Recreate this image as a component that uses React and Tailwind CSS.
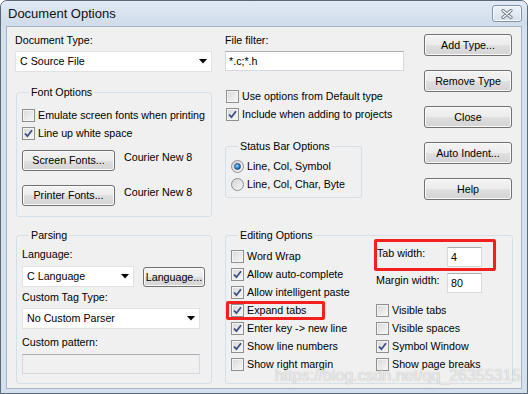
import React from 'react'

function Check({ checked, label }) {
  return (
    <div className="flex h-[13px] items-center gap-[3px] leading-[13px] whitespace-nowrap">
      <span className="relative flex h-[13px] w-[13px] shrink-0 items-center justify-center border border-[#8e8f8f] bg-[linear-gradient(135deg,#d8d8d8,#f7f7f7)] shadow-[inset_0_0_0_1px_#f4f4f4]">
        {checked && (
          <svg width="9" height="9" viewBox="0 0 9 9">
            <path d="M1 4.5 L3.4 7.2 L8 1.2" fill="none" stroke="#3c4d86" strokeWidth="1.8" />
          </svg>
        )}
      </span>
      <span>{label}</span>
    </div>
  )
}

function Radio({ checked, label }) {
  return (
    <div className="flex h-[13px] items-center gap-[3px] leading-[13px] whitespace-nowrap">
      <span className="flex h-[13px] w-[13px] shrink-0 items-center justify-center rounded-full border border-[#8e8f8f] bg-[linear-gradient(135deg,#d4d4d4,#f7f7f7)]">
        {checked && (
          <span className="h-[7px] w-[7px] rounded-full border border-[#1b4f86] bg-[radial-gradient(circle_at_40%_35%,#9fd6ff,#1f78c8_60%,#124f8c)]" />
        )}
      </span>
      <span>{label}</span>
    </div>
  )
}

function Btn({ children, className }) {
  return (
    <div
      className={`flex items-center justify-center rounded-[3px] border border-[#707070] bg-[linear-gradient(#f3f3f3,#ececec_50%,#e0e0e0_50%,#d3d3d3)] shadow-[inset_0_0_0_1px_#fbfbfb] leading-[13px] whitespace-nowrap ${className}`}
    >
      {children}
    </div>
  )
}

function Select({ value, className }) {
  return (
    <div className={`flex items-center justify-between border border-[#e2e2e2] bg-white pl-[4px] pr-[4px] leading-[13px] ${className}`}>
      <span className="whitespace-nowrap">{value}</span>
      <svg width="8" height="5" viewBox="0 0 8 5">
        <path d="M0 0 H8 L4 4.5 Z" fill="#000" />
      </svg>
    </div>
  )
}

function Input({ value, className, disabled }) {
  return (
    <div
      className={`flex items-center border border-[#d5d9df] border-t-[#abadb3] pl-[3px] leading-[13px] ${disabled ? 'bg-[#f0f0f0] border-[#b3b6b9]' : 'bg-white'} ${className}`}
    >
      {value}
    </div>
  )
}

function Group({ title, className, children }) {
  return (
    <fieldset className={`rounded-[3px] border border-[#d5dfe5] ${className}`}>
      <legend className="ml-[7px] h-[13px] px-[2px] leading-[13px]">{title}</legend>
      {children}
    </fieldset>
  )
}

export default function App() {
  return (
    <div className="relative h-[394px] w-[528px] overflow-hidden rounded-t-[7px] border border-[#5b6878] bg-[#d4e0ed] font-['Liberation_Sans',Arial,sans-serif] text-[10.7px] text-black">
      <div className="flex h-[25px] items-start justify-between bg-[linear-gradient(#e1e9f4,#d0dcea)] pl-[7px] pr-[5px]">
        <span className="mt-[5px] text-[13px] leading-[15px] text-[#111]">Document Options</span>
        <div className="mt-[4px] flex h-[17px] w-[30px] items-center justify-center rounded-[3px] border border-[#8294ab] bg-[linear-gradient(#eef3f9,#d6e0ec)] shadow-[inset_0_0_0_1px_#f6f9fc]">
          <svg width="12" height="10" viewBox="0 0 12 10">
            <path d="M2 1.5 L10 8.5 M10 1.5 L2 8.5" stroke="#6d7a8a" strokeWidth="3.2" strokeLinecap="round" />
            <path d="M2 1.5 L10 8.5 M10 1.5 L2 8.5" stroke="#ffffff" strokeWidth="1.4" strokeLinecap="round" />
          </svg>
        </div>
      </div>

      <div className="ml-[5px] mr-[5px] h-[363px] border border-[#a5b4c7] bg-[#f0f0f0]">
        {/* top section */}
        <div className="flex pl-[8px] pt-[7px]">
          <div className="w-[197px]">
            <div className="h-[13px] leading-[13px]">Document Type:</div>
            <Select value="C Source File" className="mt-[4px] h-[21px] w-[197px]" />
            <Group title="Font Options" className="ml-px mt-[14px] w-[196px] pb-[10px] pl-[5px] pt-[10px]">
              <div className="flex flex-col gap-[5px]">
                <Check label="Emulate screen fonts when printing" />
                <Check checked label="Line up white space" />
              </div>
              <div className="mt-[10px] flex items-start gap-[9px]">
                <Btn className="h-[21px] w-[93px]">Screen Fonts...</Btn>
                <span className="mt-[1px] leading-[13px]">Courier New 8</span>
              </div>
              <div className="mt-[14px] flex items-start gap-[9px]">
                <Btn className="h-[21px] w-[93px]">Printer Fonts...</Btn>
                <span className="mt-[1px] leading-[13px]">Courier New 8</span>
              </div>
            </Group>
          </div>

          <div className="ml-[13px] w-[180px]">
            <div className="h-[13px] leading-[13px]">File filter:</div>
            <Input value="*.c;*.h" className="mt-[4px] h-[20px] w-[179px]" />
            <div className="ml-px mt-[19px] flex flex-col gap-[5px]">
              <Check label="Use options from Default type" />
              <Check checked label="Include when adding to projects" />
            </div>
            <Group title="Status Bar Options" className="mt-[19px] w-[137px] pb-[6px] pl-[5px] pt-[7px]">
              <div className="flex flex-col gap-[5px]">
                <Radio checked label="Line, Col, Symbol" />
                <Radio label="Line, Col, Char, Byte" />
              </div>
            </Group>
          </div>

          <div className="ml-[19px] flex w-[88px] flex-col gap-[14px]">
            <Btn className="h-[22px]">Add Type...</Btn>
            <Btn className="h-[22px]">Remove Type</Btn>
            <Btn className="h-[22px]">Close</Btn>
            <Btn className="h-[22px]">Auto Indent...</Btn>
            <Btn className="h-[22px]">Help</Btn>
          </div>
        </div>

        {/* bottom section */}
        <div className="mt-[12px] flex pl-[9px]">
          <Group title="Parsing" className="w-[196px] pb-[9px] pl-[5px] pt-[6px]">
            <div className="h-[13px] leading-[13px]">Language:</div>
            <div className="mt-[5px] flex items-start">
              <Select value="C Language" className="h-[21px] w-[112px]" />
              <Btn className="ml-[9px] mt-[1px] h-[20px] w-[62px] border-[#3a3a3a] shadow-[inset_0_0_0_1px_#a8a8a8]">Language...</Btn>
            </div>
            <div className="mt-[4px] h-[13px] leading-[13px]">Custom Tag Type:</div>
            <Select value="No Custom Parser" className="mt-[4px] h-[21px] w-[178px]" />
            <div className="mt-[7px] h-[13px] leading-[13px]">Custom pattern:</div>
            <Input disabled value="" className="mt-[5px] h-[20px] w-[178px]" />
          </Group>

          <Group title="Editing Options" className="ml-[13px] w-[288px] pb-[12px] pl-[5px]">
            <div className="flex items-start">
              <div className="flex w-[145px] flex-col gap-[5px] pt-[8px]">
                <Check label="Word Wrap" />
                <Check checked label="Allow auto-complete" />
                <Check checked label="Allow intelligent paste" />
                <Check checked label="Expand tabs" />
                <Check checked label="Enter key -> new line" />
                <Check checked label="Show line numbers" />
                <Check label="Show right margin" />
              </div>
              <div className="flex flex-col pt-[5px]">
                <div className="flex h-[20px] items-start">
                  <span className="ml-px w-[70px] leading-[13px]">Tab width:</span>
                  <Input value="4" className="h-[20px] w-[35px]" />
                </div>
                <div className="mt-[6px] flex h-[20px] items-start">
                  <span className="mt-px w-[71px] leading-[13px]">Margin width:</span>
                  <Input value="80" className="h-[20px] w-[35px]" />
                </div>
                <div className="mt-[11px] flex flex-col gap-[5px]">
                  <Check label="Visible tabs" />
                  <Check label="Visible spaces" />
                  <Check checked label="Symbol Window" />
                  <Check label="Show page breaks" />
                </div>
              </div>
            </div>
          </Group>
        </div>
      </div>

      {/* annotations over the screenshot */}
      <div className="absolute left-[225px] top-[300px] h-[19px] w-[99px] rounded-[2px] border-[3px] border-[#f41f1f]" />
      <div className="absolute left-[373px] top-[238px] h-[32px] w-[122px] rounded-[2px] border-[3px] border-[#f41f1f]" />
      <div className="absolute left-[274px] top-[366px] whitespace-nowrap text-[16px] leading-[18px] text-white/75 [text-shadow:0_0_1px_rgba(0,0,0,0.35)]">
        https://blog.csdn.net/qq_26355315
      </div>
    </div>
  )
}
